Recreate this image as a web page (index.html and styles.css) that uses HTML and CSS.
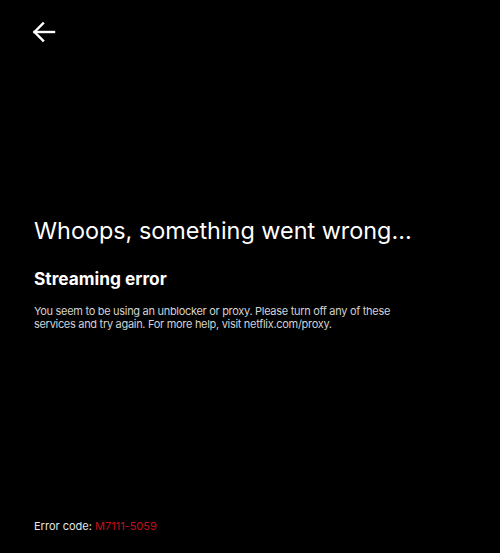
FILE: index.html
```html
<!DOCTYPE html>
<html lang="en">
<head>
<meta charset="utf-8">
<link rel="stylesheet" href="styles.css">
</head>
<body>
<div class="page">
  <div class="top">
    <button class="back" aria-label="Back">
      <svg width="24" height="22" viewBox="0 0 24 22" fill="none" stroke="#fff" stroke-width="2.4" stroke-linecap="square">
        <path d="M2.5 11H22"/>
        <path d="M11 2.5L2.5 11L11 19.5"/>
      </svg>
    </button>
  </div>
  <div class="content">
    <h1 class="title">Whoops, something went wrong...</h1>
    <h2 class="subtitle">Streaming error</h2>
    <p class="message">You seem to be using an unblocker or proxy. Please turn off any of these services and try again. For more help, visit netflix.com/proxy.</p>
  </div>
  <div class="footer">
    <span class="label">Error code: </span><span class="code">M7111-5059</span>
  </div>
</div>
</body>
</html>
```
FILE: styles.css
```css
html, body {
  margin: 0;
  padding: 0;
  background: #000;
}
body {
  font-family: Inter, "Noto Sans", sans-serif;
  color: #fff;
}
.page {
  height: 553px;
  display: flex;
  flex-direction: column;
  padding: 0 34px;
  box-sizing: border-box;
}
.top {
  padding-top: 21px;
  height: 60px;
  box-sizing: border-box;
}
.back {
  background: none;
  border: 0;
  padding: 0;
  margin-left: -2px;
  display: block;
}
.back svg { display: block; }
.content {
  margin-top: 156px;
}
.title {
  font-size: 23.4px;
  font-weight: 400;
  margin: 0;
  line-height: 30px;
  letter-spacing: 0;
}
.subtitle {
  font-size: 17.3px;
  font-weight: 700;
  margin: 22px 0 0;
  line-height: 22px;
}
.message {
  font-size: 11px;
  line-height: 13px;
  letter-spacing: -0.3px;
  color: #d2d2d2;
  margin: 15px 0 0;
  max-width: 370px;
}
.footer {
  margin-top: auto;
  padding-bottom: 20px;
  font-size: 11px;
  line-height: 14px;
}
.label { color: #e5e5e5; }
.code { color: #c0101c; }
```
